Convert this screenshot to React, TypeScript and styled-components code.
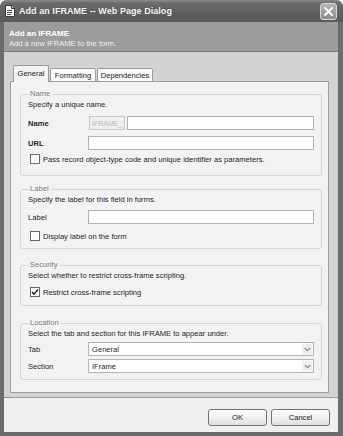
import React from "react";
import styled, { createGlobalStyle } from "styled-components";

const Global = createGlobalStyle`
  html, body { margin: 0; padding: 0; background: #ffffff; overflow: hidden; }
  * { box-sizing: border-box; }
`;

const Window = styled.div`
  width: 343px;
  height: 436px;
  background: #6b6b6b;
  border-radius: 7px 7px 0 0;
  display: flex;
  flex-direction: column;
  font-family: "Liberation Sans", Arial, sans-serif;
  font-size: 7.6px;
  color: #1e1e1e;
`;

const TitleBar = styled.div`
  height: 22px;
  flex: none;
  display: flex;
  align-items: center;
  padding: 0 6px 0 5px;
  border-radius: 7px 7px 0 0;
  background: linear-gradient(#8c8c8c 0px, #6c6c6c 3px, #5e5e5e 60%, #5a5a5a 100%);
`;

const TitleText = styled.div`
  margin-left: 4px;
  color: #f6f6f6;
  font-weight: bold;
  font-size: 9px;
  letter-spacing: 0.05px;
  text-shadow: 0 0 1px #444;
`;

const CloseButton = styled.div`
  margin-left: auto;
  width: 17px;
  height: 17px;
  border: 1px solid #d9d9d9;
  border-radius: 3px;
  background: linear-gradient(#b4b4b4, #8d8d8d);
  display: flex;
  align-items: center;
  justify-content: center;
`;

const Body = styled.div`
  flex: 1;
  display: flex;
  flex-direction: column;
  margin: 0 5px 4px 4px;
`;

const Header = styled.div`
  height: 30px;
  flex: none;
  background: #9c9c9c;
  border-bottom: 1px solid #7c7c7c;
  padding: 6px 5px 0 5px;
  display: flex;
  flex-direction: column;
`;

const HeaderTitle = styled.div`
  color: #ffffff;
  font-weight: bold;
  font-size: 8px;
  line-height: 11px;
`;

const HeaderSub = styled.div`
  color: #f0f0f0;
  line-height: 10px;
`;

const Content = styled.div`
  flex: 1;
  background: #d3d3d3;
  padding: 13px 9px 4px 6px;
  display: flex;
  flex-direction: column;
`;

const TabStrip = styled.div`
  display: flex;
  align-items: flex-end;
  padding-left: 3px;
  height: 17px;
  position: relative;
  z-index: 1;
  margin-bottom: -1px;
`;

const Tab = styled.div<{ $active?: boolean; $w: number }>`
  width: ${(p) => p.$w}px;
  height: ${(p) => (p.$active ? 17 : 14)}px;
  margin-right: 1px;
  background: ${(p) => (p.$active ? "#f2f2f2" : "#fafafa")};
  border: 1px solid #9c9c9c;
  border-bottom: ${(p) => (p.$active ? "none" : "1px solid #9c9c9c")};
  border-radius: 2px 2px 0 0;
  display: flex;
  align-items: center;
  justify-content: center;
  padding-bottom: ${(p) => (p.$active ? 2 : 0)}px;
  color: #1a1a1a;
`;

const Panel = styled.div`
  flex: 1;
  background: #f2f2f2;
  border: 1px solid #a0a0a0;
  padding: 7px 6px 0 9px;
  display: flex;
  flex-direction: column;
`;

const Group = styled.fieldset<{ $pb: number; $mt: number }>`
  margin: ${(p) => p.$mt}px 0 0 0;
  padding: 0 7px ${(p) => p.$pb}px 7px;
  border: 1px solid #d6d6d6;
  border-radius: 3px;
  min-width: 0;
  display: flex;
  flex-direction: column;
`;

const Legend = styled.legend`
  padding: 0 2px;
  line-height: 10px;
  color: #7a7a7a;
`;

const Desc = styled.div<{ $mb: number }>`
  line-height: 10px;
  margin-top: 1px;
  margin-bottom: ${(p) => p.$mb}px;
`;

const FormRow = styled.div<{ $mb?: number }>`
  display: flex;
  align-items: center;
  height: 14px;
  margin-bottom: ${(p) => p.$mb ?? 0}px;
`;

const FieldLabel = styled.div<{ $bold?: boolean }>`
  width: 60px;
  flex: none;
  font-weight: ${(p) => (p.$bold ? "bold" : "normal")};
  color: ${(p) => (p.$bold ? "#2a2a2a" : "#1e1e1e")};
`;

const Prefix = styled.div`
  width: 36px;
  height: 14px;
  margin-left: 1px;
  margin-right: 2px;
  border: 1px solid #c9c9c9;
  background: #eeeeee;
  color: #bdbdbd;
  font-size: 7px;
  display: flex;
  align-items: center;
  padding-left: 2px;
  flex: none;
`;

const TextBox = styled.div`
  flex: 1;
  height: 14px;
  border: 1px solid #b3b3b3;
  background: #ffffff;
`;

const SelectBox = styled.div`
  flex: 1;
  height: 14px;
  border: 1px solid #b3b3b3;
  background: #ffffff;
  display: flex;
  align-items: center;
  padding-left: 3px;
`;

const SelectText = styled.div`
  flex: 1;
`;

const SelectArrow = styled.div`
  width: 11px;
  height: 12px;
  background: #efefef;
  border: 1px solid #f8f8f8;
  display: flex;
  align-items: center;
  justify-content: center;
`;

const CheckRow = styled.div<{ $mt: number }>`
  display: flex;
  align-items: center;
  height: 10px;
  margin-top: ${(p) => p.$mt}px;
  padding-left: 2px;
  gap: 3px;
`;

const Box = styled.div`
  width: 10px;
  height: 10px;
  border: 1px solid #6a6a6a;
  background: #ffffff;
  flex: none;
  display: flex;
  align-items: center;
  justify-content: center;
`;

const Footer = styled.div`
  height: 35px;
  flex: none;
  background: #efefef;
  border-top: 1px solid #9a9a9a;
  display: flex;
  align-items: flex-start;
  justify-content: flex-end;
  gap: 4px;
  padding: 11px 8px 0 0;
`;

const Button = styled.div`
  width: 59px;
  height: 17px;
  border: 1px solid #727272;
  border-radius: 3px;
  background: linear-gradient(#fdfdfd, #ebebeb 70%, #dedede);
  display: flex;
  align-items: center;
  justify-content: center;
  color: #1a1a1a;
`;

const DialogIcon = () => (
  <svg width="10" height="12" viewBox="0 0 10 12">
    <path d="M0.5 0.5 H6.5 L9.5 3.5 V11.5 H0.5 Z" fill="#f4f4f4" stroke="#3a3a3a" strokeWidth="1" />
    <path d="M6.5 0.5 V3.5 H9.5" fill="#cfcfcf" stroke="#3a3a3a" strokeWidth="1" />
    <rect x="2" y="5" width="5" height="1" fill="#555" />
    <rect x="2" y="7" width="5" height="1" fill="#555" />
    <rect x="2" y="9" width="4" height="1" fill="#555" />
  </svg>
);

const CloseIcon = () => (
  <svg width="9" height="9" viewBox="0 0 9 9">
    <path d="M1 1 L8 8 M8 1 L1 8" stroke="#ffffff" strokeWidth="1.8" strokeLinecap="square" />
  </svg>
);

const Chevron = () => (
  <svg width="7" height="5" viewBox="0 0 7 5">
    <path d="M0.8 1 L3.5 3.6 L6.2 1" fill="none" stroke="#8a8a8a" strokeWidth="1.3" />
  </svg>
);

const Tick = () => (
  <svg width="8" height="8" viewBox="0 0 8 8">
    <path d="M1 4 L3 6.2 L7 1.5" fill="none" stroke="#222" strokeWidth="1.5" />
  </svg>
);

const Check = ({ checked, label, mt }: { checked?: boolean; label: string; mt: number }) => (
  <CheckRow $mt={mt}>
    <Box>{checked ? <Tick /> : null}</Box>
    <span>{label}</span>
  </CheckRow>
);

const Select = ({ value }: { value: string }) => (
  <SelectBox>
    <SelectText>{value}</SelectText>
    <SelectArrow>
      <Chevron />
    </SelectArrow>
  </SelectBox>
);

export default function App() {
  return (
    <>
      <Global />
      <Window>
        <TitleBar>
          <DialogIcon />
          <TitleText>Add an IFRAME -- Web Page Dialog</TitleText>
          <CloseButton>
            <CloseIcon />
          </CloseButton>
        </TitleBar>
        <Body>
          <Header>
            <HeaderTitle>Add an IFRAME</HeaderTitle>
            <HeaderSub>Add a new IFRAME to the form.</HeaderSub>
          </Header>
          <Content>
            <TabStrip>
              <Tab $active $w={36}>General</Tab>
              <Tab $w={46}>Formatting</Tab>
              <Tab $w={56}>Dependencies</Tab>
            </TabStrip>
            <Panel>
              <Group $pb={11} $mt={0}>
                <Legend>Name</Legend>
                <Desc $mb={6}>Specify a unique name.</Desc>
                <FormRow $mb={6}>
                  <FieldLabel $bold>Name</FieldLabel>
                  <Prefix>IFRAME_</Prefix>
                  <TextBox />
                </FormRow>
                <FormRow>
                  <FieldLabel $bold>URL</FieldLabel>
                  <TextBox />
                </FormRow>
                <Check mt={4} label="Pass record object-type code and unique identifier as parameters." />
              </Group>
              <Group $pb={7} $mt={8}>
                <Legend>Label</Legend>
                <Desc $mb={5}>Specify the label for this field in forms.</Desc>
                <FormRow>
                  <FieldLabel>Label</FieldLabel>
                  <TextBox />
                </FormRow>
                <Check mt={7} label="Display label on the form" />
              </Group>
              <Group $pb={8} $mt={11}>
                <Legend>Security</Legend>
                <Desc $mb={6}>Select whether to restrict cross-frame scripting.</Desc>
                <Check checked mt={0} label="Restrict cross-frame scripting" />
              </Group>
              <Group $pb={6} $mt={12}>
                <Legend>Location</Legend>
                <Desc $mb={3}>Select the tab and section for this IFRAME to appear under.</Desc>
                <FormRow $mb={3}>
                  <FieldLabel>Tab</FieldLabel>
                  <Select value="General" />
                </FormRow>
                <FormRow>
                  <FieldLabel>Section</FieldLabel>
                  <Select value="IFrame" />
                </FormRow>
              </Group>
            </Panel>
          </Content>
          <Footer>
            <Button>OK</Button>
            <Button>Cancel</Button>
          </Footer>
        </Body>
      </Window>
    </>
  );
}
